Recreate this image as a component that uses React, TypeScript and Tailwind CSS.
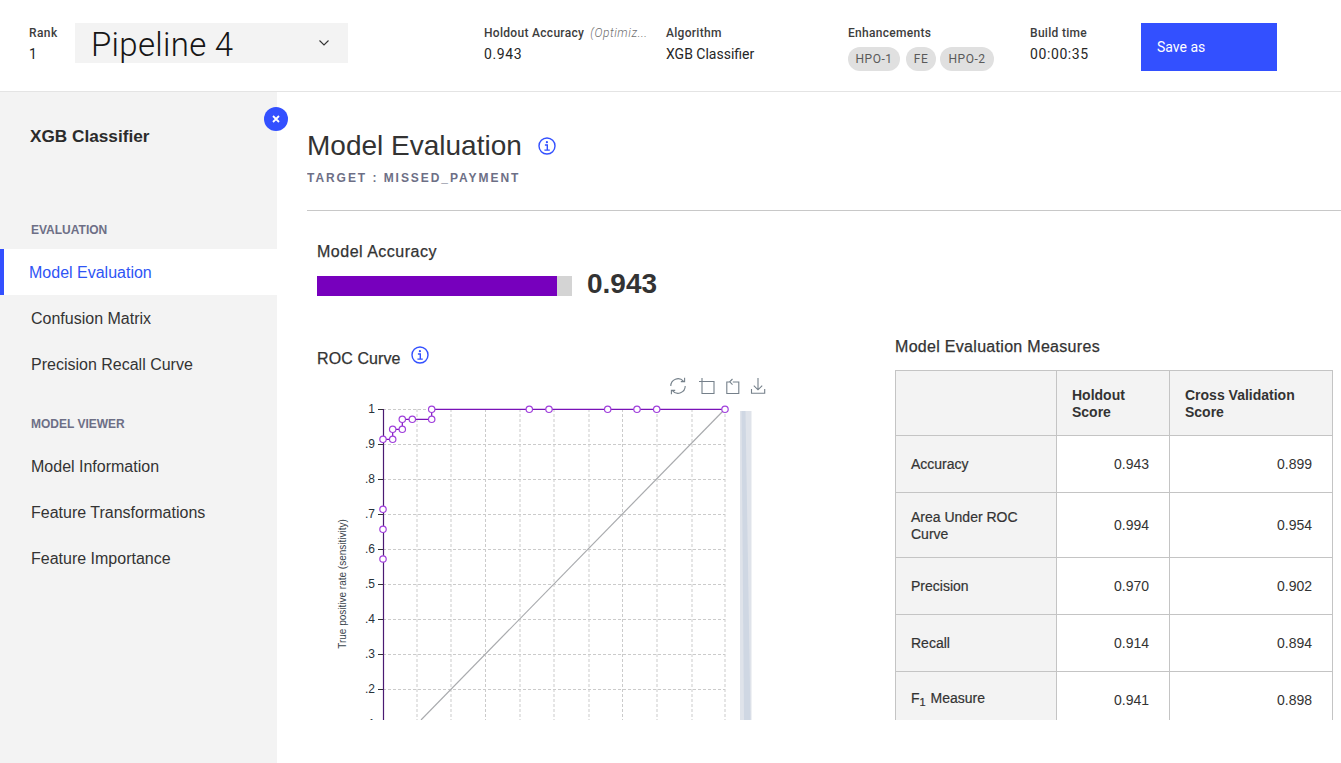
const pts: [number, number][] = [
  [383, 559], [383, 529.3], [383, 509.3], [383, 439.3], [392.7, 439.3], [392.7, 429.3], [402.3, 429.3], [402.3, 419.3],
  [412.3, 419.3], [431.7, 419.3], [431.7, 409.3], [529.3, 409.3], [549, 409.3], [607.7, 409.3], [637, 409.3], [656.7, 409.3], [725, 409.3],
];
const vGrid = [417, 451, 485.5, 520, 554, 589, 622.5, 657, 692, 725];
const ticks: [string, number][] = [["1", 409.5], [".9", 444.5], [".8", 479.5], [".7", 514.5], [".6", 549.5], [".5", 584.5], [".4", 619.5], [".3", 654.5], [".2", 689.5], [".1", 724.5]];

function Info() {
  return (
    <svg width="18" height="18" viewBox="0 0 18 18" fill="none" stroke="#3350ff" className="block">
      <circle cx="9" cy="9" r="8" strokeWidth="1.4" />
      <path d="M6.9 8h2.4v5M6.4 13.100h5.400" strokeWidth="1.4" />
      <circle cx="8.9" cy="5.2" r="1.1" fill="#3350ff" stroke="none" />
    </svg>
  );
}

function Chart() {
  return (
    <svg width="440" height="345" viewBox="330 375 440 345" className="block ml-[13px]" fontFamily="'Liberation Sans', sans-serif">
      <g stroke="#cbcbcb" strokeDasharray="3 2" strokeWidth="1">
        {vGrid.map((x) => <line key={x} x1={x} x2={x} y1="409" y2="720" />)}
        {ticks.map(([t, y]) => <line key={t} x1="383" x2="725" y1={y} y2={y} />)}
      </g>
      <line x1="421" y1="720" x2="725" y2="409" stroke="#a9abae" strokeWidth="1.2" />
      {ticks.map(([t, y]) => <line key={t} x1="378" x2="383" y1={y} y2={y} stroke="#333" />)}
      {ticks.map(([t, y]) => (
        <text key={t} x="375" y={y + 3.5} fontSize="12" textAnchor="end" fill="#27323a">{t}</text>
      ))}
      <text transform="translate(346 584) rotate(-90)" fontSize="10" textAnchor="middle" fill="#3a444c">True positive rate (sensitivity)</text>
      <path d="M383 439.3H392.7V429.3H402.3V419.3H431.7V409.3H725" fill="none" stroke="#7a12b8" strokeWidth="1.2" />
      <line x1="383.500" y1="720" x2="383.500" y2="409" stroke="#4a1a72" strokeWidth="1.2" />
      {pts.map(([x, y]) => (
        <circle key={`${x}-${y}`} cx={x} cy={y} r="3.2" fill="#fff" stroke="#a03fdc" strokeWidth="1.2" />
      ))}
      <rect x="740" y="411" width="11.5" height="309" fill="#dfe3ea" />
      <path d="M741.5 411L744 720H750.5L745.5 411Z" fill="#cfd7e3" />
      <g fill="none" stroke="#75808a" strokeWidth="1.1">
        <path d="M670.8 386a7.2 7.2 0 0 1 12.6-4.8M685.2 386a7.2 7.2 0 0 1-12.6 4.8" />
        <path d="M684.6 377.8v3.8h-3.8M671.4 394.2v-3.8h3.8" />
        <path d="M702 378v15.5h12v-12H699" />
        <path d="M730 382h-3.2v11.5h12v-11.5h-6M732.5 379l-2.8 2.8 2.8 2.8" />
        <path d="M758 378v11.5M753.8 385.600l4.2 4.2 4.2-4.2M751.5 389v4.2h13.2V389" />
      </g>
    </svg>
  );
}

const rows = [
  { name: "Accuracy", a: "0.943", b: "0.899", h: "h-[57px]" },
  { name: "Area Under ROC Curve", a: "0.994", b: "0.954", h: "h-[65px]" },
  { name: "Precision", a: "0.970", b: "0.902", h: "h-[57px]" },
  { name: "Recall", a: "0.914", b: "0.894", h: "h-[57px]" },
];

const td = "border border-[#c4c4c4] px-[15px] text-[14px] leading-[17px] text-[#333]";
const label = `${td} bg-[#f3f3f3] [-webkit-text-stroke:0.2px]`;
const num = "border border-[#c4c4c4] pr-[20px] text-right text-[14px] leading-[17px] text-[#333]";

function Measures() {
  return (
    <table className="table-fixed border-collapse w-[437px]">
      <colgroup>
        <col className="w-[161px]" />
        <col className="w-[113px]" />
        <col className="w-[163px]" />
      </colgroup>
      <tbody>
        <tr className="h-[65px] bg-[#f3f3f3]">
          <td className={td} />
          <td className={`${td} font-bold pt-[2px]`}>Holdout Score</td>
          <td className={`${td} font-bold pt-[2px]`}>Cross Validation Score</td>
        </tr>
        {rows.map((r) => (
          <tr key={r.name} className={r.h}>
            <td className={`${label} ${r.h === "h-[65px]" ? "pt-[2px]" : ""}`}>{r.name}</td>
            <td className={num}>{r.a}</td>
            <td className={num}>{r.b}</td>
          </tr>
        ))}
        <tr className="h-[57px]">
          <td className={`${label} pb-[3px]`}>F<sub className="text-[11px] leading-none mr-[1px]">1</sub> Measure</td>
          <td className={num}>0.941</td>
          <td className={num}>0.898</td>
        </tr>
      </tbody>
    </table>
  );
}

function Meta({ label, value, width, note, mono }: { label: string; value: string; width: string; note?: string; mono?: boolean }) {
  return (
    <div className={`${width} shrink-0 pt-[2px]`}>
      <div className="text-[12px] leading-[16px] font-medium tracking-[0.3px] text-[#3d3d3d] whitespace-nowrap">
        {label}
        {note && <span className="ml-[6px] italic font-light tracking-[0.55px] text-[#6f6f6f]">{note}</span>}
      </div>
      <div className={`mt-[4px] text-[14px] leading-[18px] text-[#262626] ${mono ? "tracking-[0.6px]" : ""}`}>{value}</div>
    </div>
  );
}

function Nav({ label, active, low }: { label: string; active?: boolean; low?: boolean }) {
  return active ? (
    <div className="h-[46px] pt-[2px] flex items-center bg-white border-l-4 border-[#3350ff] pl-[25px] text-[16px] text-[#2f55f5]">{label}</div>
  ) : (
    <div className={`h-[46px] flex items-center pl-[31px] text-[16px] text-[#333] ${low ? "pt-[2px]" : ""}`}>{label}</div>
  );
}

export default function App() {
  return (
    <div className="h-[763px] w-[1341px] overflow-hidden bg-white flex flex-col font-['Liberation_Sans',sans-serif]">
      <header className="h-[92px] shrink-0 border-b border-[#e4e4e4] flex items-start pt-[23px] pl-[29px] font-['Roboto',sans-serif]">
        <div className="w-[46px] shrink-0 pt-[2px]">
          <div className="text-[12px] leading-[16px] font-medium tracking-[0.4px] text-[#3d3d3d]">Rank</div>
          <div className="mt-[4px] text-[14px] leading-[18px] text-[#262626]">1</div>
        </div>
        <div className="w-[273px] h-[40px] shrink-0 bg-[#f3f3f3] flex items-center justify-between pl-[16px] pr-[18px]">
          <span className="pt-[3px] text-[33px] font-light tracking-[0.3px] text-[#161616] leading-[37px]">Pipeline 4</span>
          <svg width="12" height="8" viewBox="0 0 12 8" fill="none" stroke="#333" strokeWidth="1.1"><path d="M1.5 1.500L6 6l4.500-4.500" /></svg>
        </div>
        <div className="ml-[136px] flex">
          <Meta width="w-[182px]" label="Holdout Accuracy" note="(Optimiz..." value="0.943" mono />
          <Meta width="w-[182px]" label="Algorithm" value="XGB Classifier" />
          <div className="w-[182px] shrink-0 pt-[2px]">
            <div className="text-[12px] leading-[16px] font-medium tracking-[0.3px] text-[#3d3d3d]">Enhancements</div>
            <div className="mt-[6px] flex text-[12px] tracking-[0.5px] text-[#5a5a5a]">
              <span className="w-[52px] h-[24px] rounded-full bg-[#e0e0e0] flex items-center justify-center">HPO-1</span>
              <span className="ml-[6px] w-[30px] h-[24px] rounded-full bg-[#e0e0e0] flex items-center justify-center">FE</span>
              <span className="ml-[4px] w-[54px] h-[24px] rounded-full bg-[#e0e0e0] flex items-center justify-center">HPO-2</span>
            </div>
          </div>
          <Meta width="w-[111px]" label="Build time" value="00:00:35" mono />
          <div className="w-[136px] h-[48px] shrink-0 bg-[#3350ff] text-white text-[14px] flex items-center pl-[16px]">Save as</div>
        </div>
      </header>

      <div className="flex-1 flex min-h-0">
        <aside className="relative w-[277px] shrink-0 bg-[#f3f3f3]">
          <div className="pl-[30px] pt-[32px] text-[17.2px] leading-[24px] font-bold text-[#2b2b2b]">XGB Classifier</div>
          <div className="mt-[74px] pl-[31px] text-[12px] leading-[16px] font-bold text-[#6d6f86]">EVALUATION</div>
          <div className="mt-[11px]">
            <Nav label="Model Evaluation" active />
            <Nav label="Confusion Matrix" low />
            <Nav label="Precision Recall Curve" low />
          </div>
          <div className="mt-[29px] pl-[31px] text-[12px] leading-[16px] font-bold text-[#6d6f86]">MODEL VIEWER</div>
          <div className="mt-[12px]">
            <Nav label="Model Information" />
            <Nav label="Feature Transformations" />
            <Nav label="Feature Importance" />
          </div>
          <div className="absolute left-[264px] top-[15px] w-[24px] h-[24px] rounded-full bg-[#3350ff] flex items-center justify-center">
            <svg width="8" height="8" viewBox="0 0 8 8" stroke="#fff" strokeWidth="1.8"><path d="M1 1l6 6M7 1L1 7" /></svg>
          </div>
        </aside>

        <main className="flex-1 min-w-0 pl-[30px]">
          <div className="h-[628px] overflow-hidden">
            <div className="pt-[36px] flex items-center">
              <h1 className="text-[28px] leading-[36px] text-[#333]">Model Evaluation</h1>
              <span className="ml-[16px]"><Info /></span>
            </div>
            <div className="mt-[6px] text-[12px] leading-[16px] font-bold tracking-[1.95px] text-[#6d6f86]">TARGET : MISSED_PAYMENT</div>
            <div className="mt-[24px] h-px bg-[#c8c8c8]" />
            <div className="pl-[10px]">
              <div className="mt-[31px] text-[16px] leading-[20px] tracking-[0.5px] [-webkit-text-stroke:0.25px] text-[#333]">Model Accuracy</div>
              <div className="mt-[14px] h-[20px] flex items-center">
                <div className="w-[255px] h-[20px] bg-[#d4d4d4]">
                  <div className="w-[240px] h-[20px] bg-[#7700bd]" />
                </div>
                <div className="ml-[15px] mb-[4px] text-[28px] leading-[20px] font-bold text-[#333]">0.943</div>
              </div>
              <div className="flex">
                <div className="w-[578px] shrink-0">
                  <div className="mt-[53px] h-[20px] flex items-center">
                    <span className="text-[16px] leading-[20px] tracking-[0.1px] [-webkit-text-stroke:0.25px] text-[#333]">ROC Curve</span>
                    <span className="ml-[10px] -mt-[8px]"><Info /></span>
                  </div>
                  <div className="mt-[6px]"><Chart /></div>
                </div>
                <div className="shrink-0">
                  <div className="mt-[41px] text-[16px] leading-[20px] tracking-[0.3px] [-webkit-text-stroke:0.25px] text-[#333]">Model Evaluation Measures</div>
                  <div className="mt-[13px]"><Measures /></div>
                </div>
              </div>
            </div>
          </div>
        </main>
      </div>
    </div>
  );
}
